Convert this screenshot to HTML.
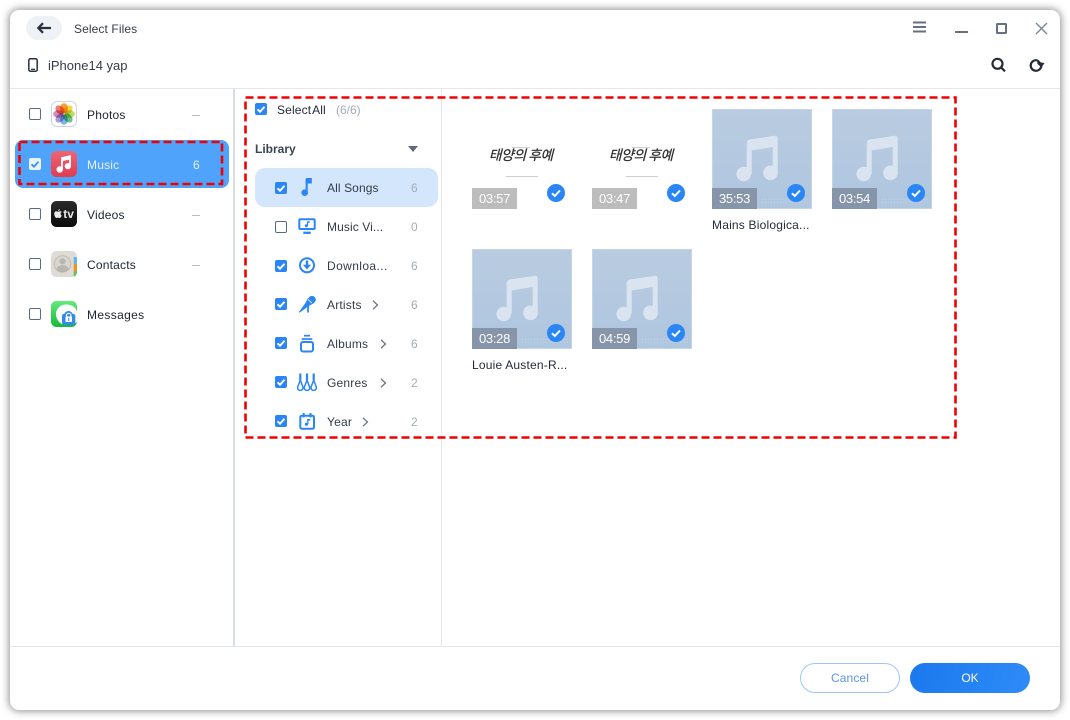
<!DOCTYPE html>
<html><head><meta charset="utf-8"><style>
html,body{margin:0;padding:0;width:1070px;height:720px;overflow:hidden;background:#fff}
body{font-family:"Liberation Sans","Noto Sans CJK KR",sans-serif;font-size:12px;color:#1f2937;position:relative}
.a{position:absolute}
#win{position:absolute;left:10px;top:10px;width:1050px;height:700px;background:#fff;border-radius:9px;box-shadow:0 0 8px 1px rgba(0,0,0,.45)}
.t{position:absolute;line-height:16px;white-space:nowrap;letter-spacing:.2px}
.cb{position:absolute;width:12px;height:12px;box-sizing:border-box;border:1.5px solid #5a6b80;border-radius:2px;background:#fff}
.cb.on{background:#2b86f5;border:none}
.cb svg{position:absolute;left:0;top:0;width:12px;height:12px}
.cb.w{background:#e9f3fe;border:none}
.n{color:#a3abb8;letter-spacing:0}
.d{position:absolute;width:8px;height:1px;background:#b8bcc2}
.th{position:absolute;width:100px;height:100px;box-sizing:border-box}
.mu{background:linear-gradient(#b9cbe1,#afc6df);border:1px solid #c6d4e5}
.mu::after{content:"";position:absolute;left:48px;bottom:3px;width:48px;height:7px;background:radial-gradient(rgba(255,255,255,.18) .6px,transparent .9px) 0 0/3px 3px}
.dur{position:absolute;left:0;bottom:0;width:45px;height:21px;color:#fff;font-size:13px;letter-spacing:-.3px;line-height:21px;text-align:center;background:#bcbcbc;z-index:1}
.mu .dur{background:#8695a9;left:-1px;bottom:-1px}
.ck{position:absolute;left:75px;top:75px;z-index:1}
.mu .ck{left:74px;top:74px}
.nt{position:absolute;left:-1px;top:-1px}
.kr{position:absolute;left:18px;top:37px;font-family:"Noto Sans CJK KR",sans-serif;font-weight:500;font-size:14px;line-height:18px;letter-spacing:-.6px;color:#333;transform:skewX(-14deg);white-space:nowrap}
.ln{position:absolute;height:1px;background:#cfcfcf}
.chev{position:absolute}
.fl ellipse{mix-blend-mode:multiply}
</style></head><body>
<div id="win"></div>

<!-- header -->
<div class="a" style="left:26px;top:16px;width:36px;height:24px;border-radius:12px;background:#eef1f5"></div>
<svg class="a" style="left:36px;top:20px" width="16" height="16" viewBox="0 0 16 16"><path d="M15 8H2.500M7 3.200L2.300 8 7 12.800" fill="none" stroke="#27303c" stroke-width="2.200"/></svg>
<div class="t" style="left:74px;top:21px;color:#333c48;letter-spacing:.1px">Select Files</div>
<svg class="a" style="left:27px;top:57px" width="12" height="16" viewBox="0 0 12 16"><rect x="1.800" y="1.800" width="8.400" height="12.400" rx="1.500" fill="none" stroke="#27303c" stroke-width="1.500"/><path d="M4 12.300h4" stroke="#27303c" stroke-width="1.300"/></svg>
<div class="t" style="left:48px;top:58px;font-size:13px;color:#333c48;letter-spacing:0">iPhone14 yap</div>

<svg class="a" style="left:910px;top:17px" width="20" height="20" viewBox="0 0 20 20"><path d="M3 5.500h13M3 10h13M3 14.500h13" stroke="#667080" stroke-width="2"/></svg>
<div class="a" style="left:955px;top:31px;width:13px;height:2px;background:#667080"></div>
<div class="a" style="left:996px;top:23px;width:11px;height:11px;box-sizing:border-box;border:2px solid #667080;border-radius:1.500px"></div>
<svg class="a" style="left:1035px;top:22px" width="13" height="13" viewBox="0 0 13 13"><path d="M1 1l11 11M12 1L1 12" stroke="#7c8592" stroke-width="1.400"/></svg>
<svg class="a" style="left:990px;top:56px" width="17" height="17" viewBox="0 0 17 17"><circle cx="7.500" cy="7.800" r="5" fill="none" stroke="#232b36" stroke-width="2.200"/><path d="M11 11.300l4 4" stroke="#232b36" stroke-width="2.200"/></svg>
<svg class="a" style="left:1028px;top:57px" width="17" height="16" viewBox="0 0 17 16"><path d="M13.300 9A5.300 5.300 0 1 1 9.500 3.400" fill="none" stroke="#232b36" stroke-width="2.200"/><path d="M9 3h1.500L13 5.500 16.500 6 13.500 10.500 9.500 7z" fill="#232b36"/></svg>

<div class="a" style="left:10px;top:88px;width:1050px;height:1px;background:#e3e8ef"></div>
<div class="a" style="left:233px;top:89px;width:2px;height:557px;background:#d9dee5"></div>
<div class="a" style="left:441px;top:89px;width:1px;height:557px;background:#e3e8ef"></div>
<div class="a" style="left:10px;top:646px;width:1050px;height:1px;background:#e3e8ef"></div>

<!-- sidebar -->
<div class="a" style="left:15px;top:140px;width:214px;height:48px;border-radius:8px;background:#4fa3fb"></div>

<div class="cb" style="left:29px;top:108px"></div>
<div class="cb w" style="left:29px;top:158px"><svg viewBox="0 0 12 12"><path d="M2.500 6.300l2.500 2.400 4.500-5" fill="none" stroke="#3a8df3" stroke-width="1.800"/></svg></div>
<div class="cb" style="left:29px;top:208px"></div>
<div class="cb" style="left:29px;top:258px"></div>
<div class="cb" style="left:29px;top:308px"></div>

<!-- photos icon -->
<svg class="a" style="left:51px;top:101px" width="26" height="26" viewBox="0 0 26 26">
<rect x=".5" y=".5" width="25" height="25" rx="5.500" fill="#fff" stroke="#ccd3dc"/>
<g class="fl" style="isolation:isolate">
<ellipse cx="13" cy="7.300" rx="3.800" ry="5.200" fill="#f9a02c"/>
<ellipse cx="13" cy="7.300" rx="3.800" ry="5.200" fill="#f8d449" transform="rotate(45 13 13)"/>
<ellipse cx="13" cy="7.300" rx="3.800" ry="5.200" fill="#bcdc6a" transform="rotate(90 13 13)"/>
<ellipse cx="13" cy="7.300" rx="3.800" ry="5.200" fill="#6cc08a" transform="rotate(135 13 13)"/>
<ellipse cx="13" cy="7.300" rx="3.800" ry="5.200" fill="#7cb8e6" transform="rotate(180 13 13)"/>
<ellipse cx="13" cy="7.300" rx="3.800" ry="5.200" fill="#a79ad6" transform="rotate(225 13 13)"/>
<ellipse cx="13" cy="7.300" rx="3.800" ry="5.200" fill="#d48cbc" transform="rotate(270 13 13)"/>
<ellipse cx="13" cy="7.300" rx="3.800" ry="5.200" fill="#ee7a72" transform="rotate(315 13 13)"/>
</g></svg>
<!-- music icon -->
<svg class="a" style="left:51px;top:151px" width="26" height="26" viewBox="0 0 26 26">
<defs><linearGradient id="m" x1="0" y1="0" x2="0" y2="1"><stop offset="0" stop-color="#ee6673"/><stop offset="1" stop-color="#e23b50"/></linearGradient></defs>
<rect width="26" height="26" rx="5.500" fill="url(#m)"/>
<path d="M11 18.500V7l8-1.800V15" fill="none" stroke="#fff" stroke-width="1.800"/>
<path d="M11 9l8-1.800" stroke="#fff" stroke-width="2.400"/>
<circle cx="8.700" cy="18.500" r="3.200" fill="#fff"/><circle cx="16.800" cy="15.200" r="3.100" fill="#fff"/></svg>
<!-- tv icon -->
<svg class="a" style="left:51px;top:201px" width="26" height="26" viewBox="0 0 26 26">
<defs><linearGradient id="tv" x1="0" y1="0" x2="0" y2="1"><stop offset="0" stop-color="#2b2b2d"/><stop offset="1" stop-color="#0c0c0d"/></linearGradient></defs>
<rect width="26" height="26" rx="5.500" fill="url(#tv)"/>
<path d="M8.800 10.300c-.5 0-1.300.5-1.800.5s-1-.5-1.800-.5C4 10.300 3.300 11.500 3.300 13c0 1.800 1.200 4 2.200 4 .6 0 .9-.4 1.600-.4s.9.400 1.600.4c.9 0 1.700-1.500 2-2.500-1.500-.8-1.400-2.800 0-3.500-.4-.5-1.100-.7-1.900-.7zM7.200 10c0-1 .7-1.800 1.600-2 .1 1-.7 2-1.600 2z" fill="#ececec"/>
<text x="12.300" y="17" font-family="Liberation Sans" font-size="12" font-weight="bold" fill="#ececec">tv</text></svg>
<!-- contacts icon -->
<svg class="a" style="left:51px;top:251px" width="26" height="26" viewBox="0 0 26 26">
<rect width="26" height="26" rx="5.500" fill="#dfdbd4"/>
<path d="M22.700 6H26v7h-3.300z" fill="#5cb8ee"/><path d="M22.700 13H26v7h-3.300z" fill="#f0931f"/><path d="M22.700 20H26v1a5 5 0 0 1-3.300 4.700z" fill="#5fc45f"/>
<circle cx="11.500" cy="13" r="8.300" fill="#dad6cf" stroke="#bcb9b3" stroke-width=".9"/><circle cx="11.500" cy="10.300" r="3.100" fill="#b9b6b0"/><path d="M5.200 18.500c1-3.500 3.700-4.300 6.300-4.300s5.300.8 6.300 4.300a8.300 8.300 0 0 1-12.600 0z" fill="#b9b6b0"/></svg>
<!-- messages icon -->
<svg class="a" style="left:51px;top:301px" width="26" height="26" viewBox="0 0 26 26">
<defs><linearGradient id="g" x1="0" y1="0" x2="0" y2="1"><stop offset="0" stop-color="#62ea7b"/><stop offset="1" stop-color="#17b93a"/></linearGradient></defs>
<rect width="26" height="26" rx="5.500" fill="url(#g)"/>
<path d="M15 3.500c6 0 11 3.200 11 8.500v9l-3 2H13c-1.500 0-2.500-.3-3.500-.8C7.500 20.500 5 17.500 5 13c0-5.500 4.500-9.500 10-9.500z" fill="#fff"/>
<path d="M11 15c0-1.500 1-2 2.500-2.200.5-1.700 2.200-2.800 4-2.800s3.500 1.100 4 2.800c1.500.2 2.800.7 2.800 2.200v6.500a2.500 2.500 0 0 1-2.500 2.500H13.500A2.500 2.500 0 0 1 11 21.500z" fill="#3189f2"/>
<path d="M15.500 16v-1.500a2.200 2.200 0 0 1 4.400 0V16" fill="none" stroke="#fff" stroke-width="1.200"/><rect x="14.500" y="15.500" width="6.500" height="5.500" rx=".8" fill="#fff"/><path d="M17.700 17v3" stroke="#3189f2" stroke-width="1.100"/></svg>

<div class="t" style="left:87px;top:107px;color:#1c2430">Photos</div>
<div class="t" style="left:87px;top:157px;color:#e6f1fe">Music</div>
<div class="t" style="left:87px;top:207px;color:#1c2430">Videos</div>
<div class="t" style="left:87px;top:257px;color:#1c2430">Contacts</div>
<div class="t" style="left:87px;top:307px;color:#1c2430;letter-spacing:.35px">Messages</div>
<div class="d" style="left:192px;top:115px"></div>
<div class="t" style="left:193px;top:157px;color:#e6f1fe">6</div>
<div class="d" style="left:192px;top:215px"></div>
<div class="d" style="left:192px;top:265px"></div>

<!-- middle panel -->
<div class="cb on" style="left:255px;top:103px"><svg viewBox="0 0 12 12"><path d="M2.500 6.300l2.500 2.400 4.500-5" fill="none" stroke="#fff" stroke-width="1.900"/></svg></div>
<div class="t" style="left:277px;top:102px;color:#1f2937;letter-spacing:.15px;word-spacing:-2px">Select All</div>
<div class="t n" style="left:336px;top:102px">(6/6)</div>
<div class="t" style="left:255px;top:141px;font-weight:bold;color:#3a4452;letter-spacing:0">Library</div>
<svg class="a" style="left:408px;top:146px" width="10" height="6" viewBox="0 0 10 6"><path d="M0 0h10L5 6z" fill="#5f6b7a"/></svg>
<div class="a" style="left:255px;top:168px;width:183px;height:39px;border-radius:10px;background:#d3e6fb"></div>

<div class="cb on" style="left:275px;top:182px"><svg viewBox="0 0 12 12"><path d="M2.500 6.300l2.500 2.400 4.500-5" fill="none" stroke="#fff" stroke-width="1.900"/></svg></div>
<div class="cb" style="left:275px;top:221px"></div>
<div class="cb on" style="left:275px;top:260px"><svg viewBox="0 0 12 12"><path d="M2.500 6.300l2.500 2.400 4.500-5" fill="none" stroke="#fff" stroke-width="1.900"/></svg></div>
<div class="cb on" style="left:275px;top:298px"><svg viewBox="0 0 12 12"><path d="M2.500 6.300l2.500 2.400 4.500-5" fill="none" stroke="#fff" stroke-width="1.900"/></svg></div>
<div class="cb on" style="left:275px;top:337px"><svg viewBox="0 0 12 12"><path d="M2.500 6.300l2.500 2.400 4.500-5" fill="none" stroke="#fff" stroke-width="1.900"/></svg></div>
<div class="cb on" style="left:275px;top:376px"><svg viewBox="0 0 12 12"><path d="M2.500 6.300l2.500 2.400 4.500-5" fill="none" stroke="#fff" stroke-width="1.900"/></svg></div>
<div class="cb on" style="left:275px;top:415px"><svg viewBox="0 0 12 12"><path d="M2.500 6.300l2.500 2.400 4.500-5" fill="none" stroke="#fff" stroke-width="1.900"/></svg></div>

<!-- nav icons -->
<svg class="a" style="left:297px;top:177px" width="20" height="20" viewBox="0 0 20 20"><path d="M8.600 2.500Q8.600 1 10 1h4.800v5.500H10.700V16H8.600z" fill="#2b86f5"/><circle cx="7.700" cy="15.700" r="3.300" fill="#2b86f5"/></svg>
<svg class="a" style="left:297px;top:216px" width="20" height="20" viewBox="0 0 20 20"><rect x="2.300" y="3.300" width="15.400" height="9.700" rx="1" fill="none" stroke="#2b86f5" stroke-width="2"/><path d="M6.300 16.800h7.400" stroke="#2b86f5" stroke-width="2.300"/><path d="M10.500 5.500v4" stroke="#2b86f5" stroke-width="1.200"/><path d="M10.500 5.300h2.300v1.500h-2.300z" fill="#2b86f5"/><circle cx="9.300" cy="9.700" r="1.500" fill="#2b86f5"/></svg>
<svg class="a" style="left:297px;top:255px" width="20" height="20" viewBox="0 0 20 20"><circle cx="10" cy="10.300" r="7" fill="none" stroke="#2b86f5" stroke-width="2"/><path d="M10 5.500v6" stroke="#2b86f5" stroke-width="2.400"/><path d="M6 9.800h8L10 14.500z" fill="#2b86f5"/></svg>
<svg class="a" style="left:297px;top:294px" width="20" height="20" viewBox="0 0 20 20"><circle cx="15" cy="5.700" r="3.800" fill="#2b86f5"/><path d="M11.200 3.800l5.500 5.500-5.700 3.200-8.500 6.300-.6-.8 6.300-8.600z" fill="#2b86f5"/><path d="M11 5.300l3.800 3.800" stroke="#fff" stroke-width=".8"/><path d="M11 11v7.500" stroke="#2b86f5" stroke-width="1.800"/></svg>
<svg class="a" style="left:297px;top:333px" width="20" height="20" viewBox="0 0 20 20"><rect x="4" y="9" width="12" height="9.500" rx="2" fill="none" stroke="#2b86f5" stroke-width="2"/><path d="M4.700 6h10.600" stroke="#2b86f5" stroke-width="1.700"/><path d="M7 2.700h6" stroke="#2b86f5" stroke-width="1.700"/></svg>
<svg class="a" style="left:297px;top:372px" width="20" height="20" viewBox="0 0 20 20" fill="none" stroke="#2b86f5" stroke-width="1.500"><path d="M3.300 1.500V8M10 1.500V8M16.700 1.500V8" stroke-width="2.200"/><path d="M3.300 8L.9 14.500a2.700 2.700 0 1 0 4.800 0zM10 8l-2.400 6.500a2.700 2.700 0 1 0 4.800 0zM16.700 8l-2.400 6.500a2.700 2.700 0 1 0 4.800 0z"/></svg>
<svg class="a" style="left:297px;top:411px" width="20" height="20" viewBox="0 0 20 20"><rect x="3.300" y="4.700" width="13.700" height="13" rx="1.500" fill="none" stroke="#2b86f5" stroke-width="2"/><path d="M6.700 2v4.500M13.500 2v4.500" stroke="#2b86f5" stroke-width="2"/><path d="M10.800 8v5" stroke="#2b86f5" stroke-width="1.300"/><path d="M10.800 8h2.500v1.600h-2.500z" fill="#2b86f5"/><circle cx="9.400" cy="13.200" r="1.600" fill="#2b86f5"/></svg>

<div class="t" style="left:327px;top:180px;color:#333c48;letter-spacing:.1px">All Songs</div>
<div class="t" style="left:327px;top:219px;color:#333c48;letter-spacing:.1px">Music Vi...</div>
<div class="t" style="left:327px;top:258px;color:#333c48;letter-spacing:.4px">Downloa...</div>
<div class="t" style="left:327px;top:297px;color:#333c48">Artists</div>
<div class="t" style="left:327px;top:336px;color:#333c48">Albums</div>
<div class="t" style="left:327px;top:375px;color:#333c48">Genres</div>
<div class="t" style="left:327px;top:414px;color:#333c48">Year</div>
<div class="t n" style="left:411px;top:180px">6</div>
<div class="t n" style="left:411px;top:219px">0</div>
<div class="t n" style="left:411px;top:258px">6</div>
<div class="t n" style="left:411px;top:297px">6</div>
<div class="t n" style="left:411px;top:336px">6</div>
<div class="t n" style="left:411px;top:375px">2</div>
<div class="t n" style="left:411px;top:414px">2</div>
<svg class="chev" style="left:372px;top:300px" width="7" height="10" viewBox="0 0 7 10"><path d="M1 .8L5.500 5 1 9.200" fill="none" stroke="#6b7480" stroke-width="1.300"/></svg>
<svg class="chev" style="left:380px;top:339px" width="7" height="10" viewBox="0 0 7 10"><path d="M1 .8L5.500 5 1 9.200" fill="none" stroke="#6b7480" stroke-width="1.300"/></svg>
<svg class="chev" style="left:380px;top:378px" width="7" height="10" viewBox="0 0 7 10"><path d="M1 .8L5.500 5 1 9.200" fill="none" stroke="#6b7480" stroke-width="1.300"/></svg>
<svg class="chev" style="left:362px;top:417px" width="7" height="10" viewBox="0 0 7 10"><path d="M1 .8L5.500 5 1 9.200" fill="none" stroke="#6b7480" stroke-width="1.300"/></svg>

<!-- thumbs -->
<div class="th" style="left:472px;top:109px"><div class="ln" style="left:40px;top:38px;width:18px"></div><div class="kr">태양의 후예</div><div class="ln" style="left:34px;top:67px;width:32px"></div><div class="dur">03:57</div><svg class="ck" width="18" height="18" viewBox="0 0 18 18"><circle cx="9" cy="9" r="9" fill="#2b86f5"/><path d="M5 9.300l2.800 2.700L13 6.500" fill="none" stroke="#fff" stroke-width="2"/></svg></div>
<div class="th" style="left:592px;top:109px"><div class="ln" style="left:40px;top:38px;width:18px"></div><div class="kr">태양의 후예</div><div class="ln" style="left:34px;top:67px;width:32px"></div><div class="dur">03:47</div><svg class="ck" width="18" height="18" viewBox="0 0 18 18"><circle cx="9" cy="9" r="9" fill="#2b86f5"/><path d="M5 9.300l2.800 2.700L13 6.500" fill="none" stroke="#fff" stroke-width="2"/></svg></div>

<div class="th mu" style="left:712px;top:109px"><svg class="nt" width="100" height="100" viewBox="0 0 100 100"><path d="M34.700 34Q34.700 31 38 30.500L62.500 26.800Q65.700 26.400 65.700 29.500V64H60.700V38L39.700 41.500V65H34.700z" fill="#dae4f0"/><circle cx="31.700" cy="65" r="7.300" fill="#dae4f0"/><circle cx="58.500" cy="63.800" r="7.300" fill="#dae4f0"/></svg><div class="dur">35:53</div><svg class="ck" width="18" height="18" viewBox="0 0 18 18"><circle cx="9" cy="9" r="9" fill="#2b86f5"/><path d="M5 9.300l2.800 2.700L13 6.500" fill="none" stroke="#fff" stroke-width="2"/></svg></div>
<div class="th mu" style="left:832px;top:109px"><svg class="nt" width="100" height="100" viewBox="0 0 100 100"><path d="M34.700 34Q34.700 31 38 30.500L62.500 26.800Q65.700 26.400 65.700 29.500V64H60.700V38L39.700 41.500V65H34.700z" fill="#dae4f0"/><circle cx="31.700" cy="65" r="7.300" fill="#dae4f0"/><circle cx="58.500" cy="63.800" r="7.300" fill="#dae4f0"/></svg><div class="dur">03:54</div><svg class="ck" width="18" height="18" viewBox="0 0 18 18"><circle cx="9" cy="9" r="9" fill="#2b86f5"/><path d="M5 9.300l2.800 2.700L13 6.500" fill="none" stroke="#fff" stroke-width="2"/></svg></div>
<div class="th mu" style="left:472px;top:249px"><svg class="nt" width="100" height="100" viewBox="0 0 100 100"><path d="M34.700 34Q34.700 31 38 30.500L62.500 26.800Q65.700 26.400 65.700 29.500V64H60.700V38L39.700 41.500V65H34.700z" fill="#dae4f0"/><circle cx="31.700" cy="65" r="7.300" fill="#dae4f0"/><circle cx="58.500" cy="63.800" r="7.300" fill="#dae4f0"/></svg><div class="dur">03:28</div><svg class="ck" width="18" height="18" viewBox="0 0 18 18"><circle cx="9" cy="9" r="9" fill="#2b86f5"/><path d="M5 9.300l2.800 2.700L13 6.500" fill="none" stroke="#fff" stroke-width="2"/></svg></div>
<div class="th mu" style="left:592px;top:249px"><svg class="nt" width="100" height="100" viewBox="0 0 100 100"><path d="M34.700 34Q34.700 31 38 30.500L62.500 26.800Q65.700 26.400 65.700 29.500V64H60.700V38L39.700 41.500V65H34.700z" fill="#dae4f0"/><circle cx="31.700" cy="65" r="7.300" fill="#dae4f0"/><circle cx="58.500" cy="63.800" r="7.300" fill="#dae4f0"/></svg><div class="dur">04:59</div><svg class="ck" width="18" height="18" viewBox="0 0 18 18"><circle cx="9" cy="9" r="9" fill="#2b86f5"/><path d="M5 9.300l2.800 2.700L13 6.500" fill="none" stroke="#fff" stroke-width="2"/></svg></div>
<div class="t" style="left:712px;top:217px;color:#1f2937">Mains Biologica...</div>
<div class="t" style="left:472px;top:357px;color:#1f2937">Louie Austen-R...</div>

<!-- footer buttons -->
<div class="a" style="left:800px;top:663px;width:100px;height:30px;box-sizing:border-box;border:1px solid #9fc5f8;border-radius:15px;text-align:center;line-height:29px;color:#5c94e6;letter-spacing:.1px">Cancel</div>
<div class="a" style="left:910px;top:663px;width:120px;height:30px;border-radius:15px;background:linear-gradient(100deg,#1b79ee,#2e8bf8);text-align:center;line-height:30px;color:#fff">OK</div>

<!-- red dashed overlays -->
<svg class="a" style="left:0;top:0;pointer-events:none" width="1070" height="720">
<rect x="19.500" y="142" width="202.500" height="42" fill="none" stroke="#f00000" stroke-width="2.600" stroke-dasharray="8 4"/>
<rect x="245.500" y="97.500" width="710" height="340" fill="none" stroke="#f00000" stroke-width="2.600" stroke-dasharray="8 4"/>
</svg>
</body></html>
